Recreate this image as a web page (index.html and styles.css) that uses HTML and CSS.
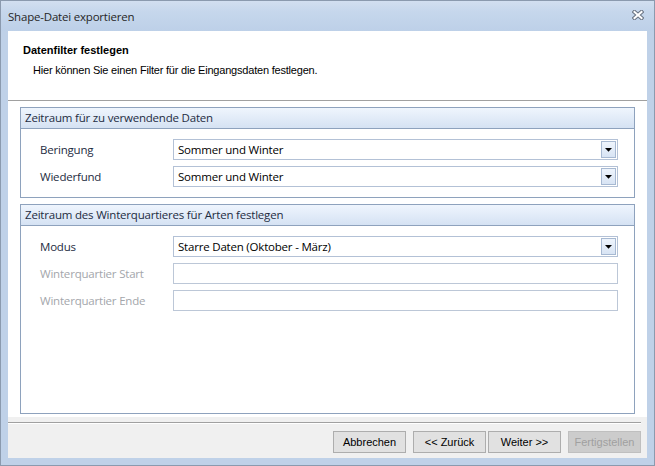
FILE: index.html
```html
<!DOCTYPE html>
<html lang="de">
<head>
<meta charset="utf-8">
<title>Shape-Datei exportieren</title>
<link rel="stylesheet" href="styles.css">
</head>
<body>
<div class="window">
  <div class="titlebar">
    <span class="title">Shape-Datei exportieren</span>
    <svg class="close" width="12" height="10" viewBox="0 0 12 10">
      <path d="M2.5 2 L9.5 8 M9.5 2 L2.5 8" stroke="#6b7584" stroke-width="4.2" stroke-linecap="square" fill="none"/>
      <path d="M2.5 2 L9.5 8 M9.5 2 L2.5 8" stroke="#ffffff" stroke-width="2" stroke-linecap="square" fill="none"/>
    </svg>
  </div>
  <div class="client">
    <div class="header">
      <div class="h-title">Datenfilter festlegen</div>
      <div class="h-sub">Hier können Sie einen Filter für die Eingangsdaten festlegen.</div>
    </div>
    <div class="content">
      <section class="panel">
        <div class="panel-head">Zeitraum für zu verwendende Daten</div>
        <div class="panel-body">
          <div class="row">
            <span class="label">Beringung</span>
            <div class="combo"><span class="val">Sommer und Winter</span><span class="dd"><svg width="7" height="4" viewBox="0 0 7 4"><path d="M0 0 H7 L3.5 3.8 Z" fill="#000"/></svg></span></div>
          </div>
          <div class="row">
            <span class="label">Wiederfund</span>
            <div class="combo"><span class="val">Sommer und Winter</span><span class="dd"><svg width="7" height="4" viewBox="0 0 7 4"><path d="M0 0 H7 L3.5 3.8 Z" fill="#000"/></svg></span></div>
          </div>
        </div>
      </section>
      <section class="panel grow">
        <div class="panel-head">Zeitraum des Winterquartieres für Arten festlegen</div>
        <div class="panel-body">
          <div class="row">
            <span class="label">Modus</span>
            <div class="combo"><span class="val">Starre Daten (Oktober - März)</span><span class="dd"><svg width="7" height="4" viewBox="0 0 7 4"><path d="M0 0 H7 L3.5 3.8 Z" fill="#000"/></svg></span></div>
          </div>
          <div class="row">
            <span class="label disabled">Winterquartier Start</span>
            <div class="combo text"></div>
          </div>
          <div class="row">
            <span class="label disabled">Winterquartier Ende</span>
            <div class="combo text"></div>
          </div>
        </div>
      </section>
    </div>
    <div class="footer">
      <div class="fline"></div>
      <div class="buttons">
        <button class="btn">Abbrechen</button>
        <button class="btn gap">&lt;&lt; Zurück</button>
        <button class="btn">Weiter &gt;&gt;</button>
        <button class="btn gap disabled" disabled>Fertigstellen</button>
      </div>
    </div>
  </div>
</div>
</body>
</html>
```
FILE: styles.css
```css
html, body {
  margin: 0;
  padding: 0;
  background: #ffffff;
}

.window {
  width: 655px;
  height: 466px;
  box-sizing: border-box;
  border: 1px solid #8b9aae;
  background: #bfd1e8;
  padding: 0 7px 7px 7px;
  display: flex;
  flex-direction: column;
  font-family: "Open Sans", "Noto Sans", sans-serif;
}

.titlebar {
  height: 30px;
  margin: 0 -7px;
  padding: 0 10px 0 7px;
  background: linear-gradient(#d2dff0 0%, #c6d7ec 35%, #bdd0e8 100%);
  display: flex;
  align-items: center;
  justify-content: space-between;
}

.title {
  font-size: 11.5px;
  color: #262626;
  letter-spacing: -0.2px;
}

.close {
  display: block;
  margin-top: -2px;
}

.client {
  flex: 1;
  background: #ffffff;
  display: flex;
  flex-direction: column;
}

.header {
  height: 70px;
  box-sizing: border-box;
  border-bottom: 1px solid #a0a0a0;
  padding: 13px 0 0 15px;
  font-family: "Liberation Sans", Arial, sans-serif;
  font-size: 11px;
  line-height: 13px;
  color: #000000;
}

.h-title {
  font-weight: bold;
}

.h-sub {
  margin-top: 7px;
  margin-left: 10px;
  letter-spacing: -0.2px;
}

.content {
  flex: 1;
  padding: 6px 12px 3px 12px;
  display: flex;
  flex-direction: column;
  gap: 6px;
}

.panel {
  border: 1px solid #8ea2bd;
  display: flex;
  flex-direction: column;
}

.panel.grow {
  flex: 1;
}

.panel-head {
  height: 20px;
  border-bottom: 1px solid #8ea2bd;
  background: linear-gradient(#eff5fd, #d5e2f3);
  padding-left: 4px;
  font-size: 11.5px;
  line-height: 20px;
  color: #1e2c42;
  letter-spacing: -0.2px;
}

.panel-body {
  padding: 10px 16px 10px 19px;
  display: flex;
  flex-direction: column;
  gap: 6px;
}

.row {
  display: flex;
  align-items: center;
  height: 21px;
}

.label {
  width: 133px;
  flex: none;
  font-size: 11.5px;
  color: #1e2c42;
  letter-spacing: -0.2px;
}

.label.disabled {
  color: #a3a6ab;
}

.combo {
  flex: 1;
  height: 21px;
  box-sizing: border-box;
  border: 1px solid #b3c1d6;
  background: #ffffff;
  display: flex;
  align-items: center;
  padding-left: 4px;
}

.combo.text {
  border-color: #bcc7d7;
}

.val {
  font-size: 11.5px;
  color: #000000;
  letter-spacing: -0.2px;
}

.dd {
  margin-left: auto;
  margin-right: 1px;
  width: 15px;
  height: 17px;
  box-sizing: border-box;
  border: 1px solid #a7b9d2;
  background: linear-gradient(#eef4fc, #d8e4f4);
  display: flex;
  align-items: center;
  justify-content: center;
}

.dd svg {
  display: block;
}

.footer {
  height: 41px;
  box-sizing: border-box;
  background: #f0f0f0;
  padding: 5px 6px 0 0;
}

.fline {
  border-top: 1px solid #a0a0a0;
  border-bottom: 1px solid #ffffff;
}

.buttons {
  margin-top: 7px;
  display: flex;
  justify-content: flex-end;
  gap: 2px;
}

.btn {
  width: 73px;
  height: 22px;
  box-sizing: border-box;
  border: 1px solid #adadad;
  background: #e1e1e1;
  font-family: "Liberation Sans", Arial, sans-serif;
  font-size: 11px;
  color: #000000;
  padding: 0;
  margin: 0;
}

.btn.gap {
  margin-left: 5px;
}

.btn.disabled {
  background: #cccccc;
  border-color: #bfbfbf;
  color: #a0a0a0;
}
```
